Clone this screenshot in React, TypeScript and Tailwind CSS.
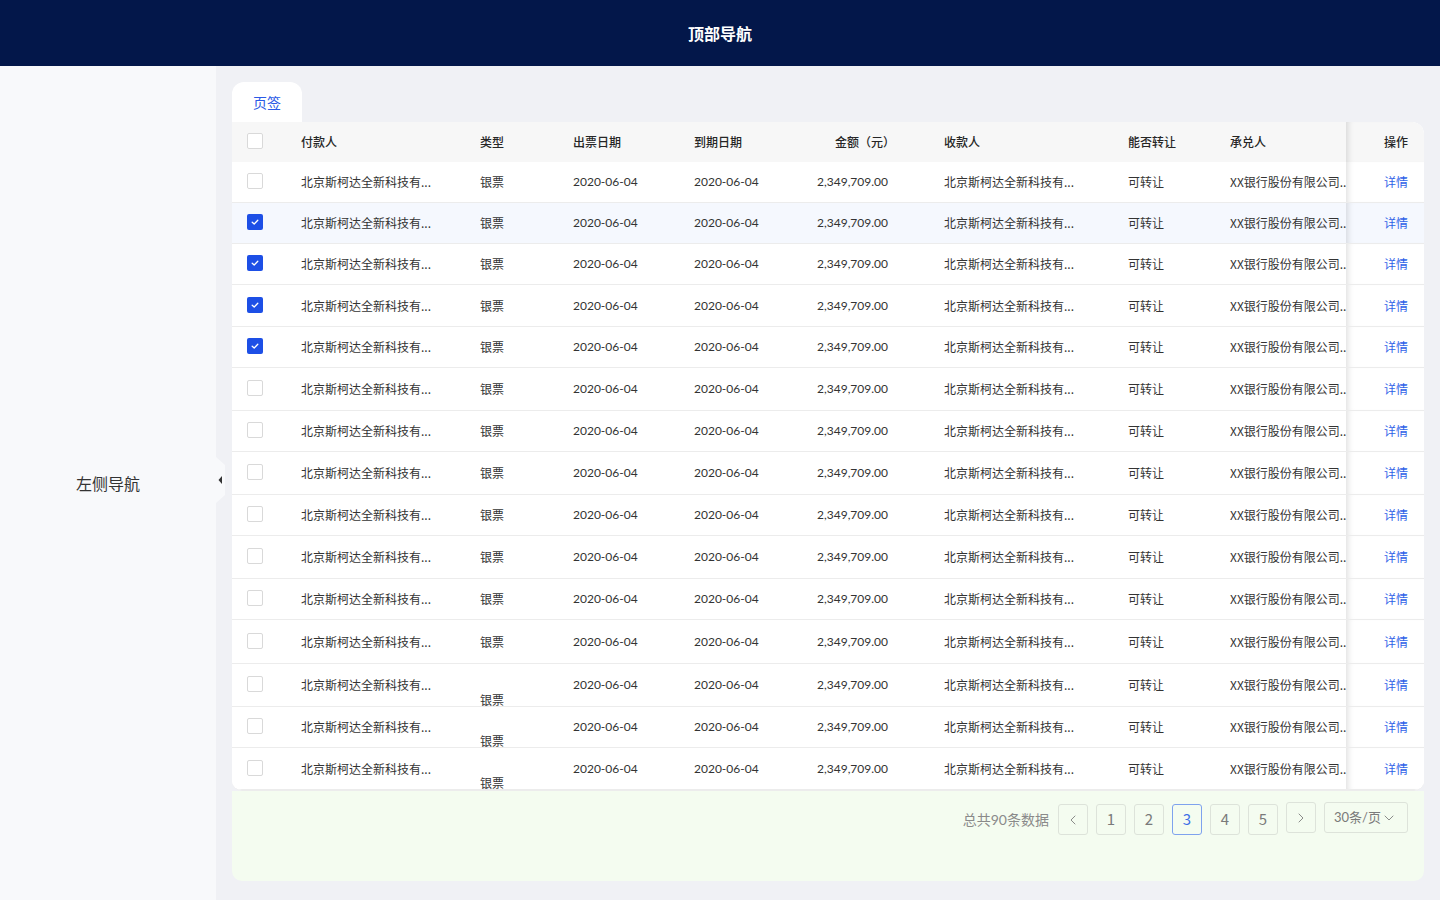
import React from 'react'
import { ChevronLeft, ChevronRight, ChevronDown } from 'lucide-react'

const FONT = { fontFamily: '"Noto Sans CJK SC", "Noto Sans", sans-serif' }
const NUM = { fontFamily: 'Lato, "Noto Sans CJK SC", sans-serif' }

interface Row {
  checked: boolean
  active?: boolean
  lowType?: boolean
  h: string
}

// 行高与截图逐行对齐
const rows: Row[] = [
  { checked: false, h: 'h-[41px]' },
  { checked: true, active: true, h: 'h-[41px]' },
  { checked: true, h: 'h-[41px]' },
  { checked: true, h: 'h-[42px]' },
  { checked: true, h: 'h-[41px]' },
  { checked: false, h: 'h-[43px]' },
  { checked: false, h: 'h-[41px]' },
  { checked: false, h: 'h-[43px]' },
  { checked: false, h: 'h-[41px]' },
  { checked: false, h: 'h-[43px]' },
  { checked: false, h: 'h-[41px]' },
  { checked: false, h: 'h-[44px]' },
  { checked: false, lowType: true, h: 'h-[43px]' },
  { checked: false, lowType: true, h: 'h-[41px]' },
  { checked: false, lowType: true, h: 'h-[42px]' },
]

function Checkbox({ checked }: { checked: boolean }) {
  if (checked) {
    return (
      <span className="flex w-4 h-4 items-center justify-center rounded-[2px] bg-[#1d4fe6]">
        <svg width="10" height="10" viewBox="0 0 10 10" fill="none">
          <path d="M2.2 5.2 L4.2 7 L7.8 3.2" stroke="white" strokeWidth="1.3" strokeLinecap="round" strokeLinejoin="round" />
        </svg>
      </span>
    )
  }
  return <span className="block w-4 h-4 rounded-[2px] border border-[#d9d9d9] bg-white" />
}

const fixedShadow = 'shadow-[inset_7px_0_6px_-5px_rgba(0,0,0,0.13)]'

function HeaderRow() {
  return (
    <div className="flex h-[40px] bg-[#f7f7f7] text-[12px] font-medium text-[#262626] rounded-tr-[12px]">
      <div className="w-[53px] flex items-center pl-[15px] -mt-[2px]">
        <Checkbox checked={false} />
      </div>
      <div className="w-[179px] flex items-center pl-4">付款人</div>
      <div className="w-[93px] flex items-center pl-4">类型</div>
      <div className="w-[121px] flex items-center pl-4">出票日期</div>
      <div className="w-[121px] flex items-center pl-4">到期日期</div>
      <div className="w-[105px] flex items-center justify-end pr-[9px]">金额（元）</div>
      <div className="w-[208px] flex items-center pl-[40px]">收款人</div>
      <div className="w-[102px] flex items-center pl-4">能否转让</div>
      <div className="w-[132px] flex items-center pl-4">承兑人</div>
      <div className={`w-[78px] flex items-center justify-end pr-4 rounded-tr-[12px] ${fixedShadow}`}>操作</div>
    </div>
  )
}

function BodyRow({ row }: { row: Row }) {
  const bg = row.active ? 'bg-[#f5f8fe]' : 'bg-white'
  return (
    <div className={`flex ${row.h} ${bg} border-b border-[#ececec] text-[12px] text-[#333333] whitespace-nowrap`}>
      <div className="w-[53px] flex items-center pl-[15px] -mt-[2px]">
        <Checkbox checked={row.checked} />
      </div>
      <div className="w-[179px] flex items-center pl-4">北京斯柯达全新科技有...</div>
      {row.lowType ? (
        <div className="w-[93px] flex items-end pl-4 leading-[14px] -mb-[1px]">银票</div>
      ) : (
        <div className="w-[93px] flex items-center pl-4">银票</div>
      )}
      <div className="w-[121px] flex items-center pl-4" style={NUM}>2020-06-04</div>
      <div className="w-[121px] flex items-center pl-4" style={NUM}>2020-06-04</div>
      <div className="w-[105px] flex items-center justify-end pr-4" style={NUM}>2,349,709.00</div>
      <div className="w-[208px] flex items-center pl-[40px]">北京斯柯达全新科技有...</div>
      <div className="w-[102px] flex items-center pl-4">可转让</div>
      <div className="w-[132px] flex items-center pl-4 overflow-visible">XX银行股份有限公司...</div>
      <div className={`w-[78px] flex items-center justify-end pr-4 ${bg} ${fixedShadow}`}>
        <span className="text-[#2f62e8] cursor-pointer">详情</span>
      </div>
    </div>
  )
}

function PageButton({ children, active }: { children: React.ReactNode; active?: boolean }) {
  return (
    <button
      className={`w-[30px] h-[31px] flex items-center justify-center rounded-[3px] border text-[15px] ${
        active ? 'border-[#7ea2ee] text-[#3f6fe6]' : 'border-[#dde3da] text-[#7a7a7a]'
      }`}
    >
      {children}
    </button>
  )
}

function Pagination() {
  return (
    <div className="h-[90px] bg-[#f4fcf0] rounded-b-[10px] flex justify-end items-start pt-[13px] pr-4 gap-2">
      <span className="h-[31px] flex items-center text-[14px] text-[#8a8a8a] mr-[1px]" style={NUM}>总共90条数据</span>
      <PageButton>
        <ChevronLeft className="w-4 h-4" strokeWidth={1.3} />
      </PageButton>
      <PageButton>1</PageButton>
      <PageButton>2</PageButton>
      <PageButton active>3</PageButton>
      <PageButton>4</PageButton>
      <PageButton>5</PageButton>
      <div className="-mt-[2px]">
        <PageButton>
          <ChevronRight className="w-4 h-4" strokeWidth={1.3} />
        </PageButton>
      </div>
      <button className="-mt-[2px] w-[84px] h-[31px] flex items-center justify-between pl-[9px] pr-[10px] rounded-[3px] border border-[#dde3da] text-[13px] text-[#7a7a7a]" style={NUM}>
        <span>30条/页</span>
        <ChevronDown className="w-4 h-4" strokeWidth={1.3} />
      </button>
    </div>
  )
}

export default function App() {
  return (
    <div className="w-[1440px] h-[900px] flex flex-col bg-[#f0f1f5]" style={FONT}>
      <header className="h-[66px] flex-shrink-0 bg-[#03174a] flex items-center justify-center">
        <h1 className="text-[16px] font-semibold text-white">顶部导航</h1>
      </header>
      <div className="flex flex-1 min-h-0">
        <aside className="relative w-[216px] flex-shrink-0 bg-[#f8f9fb] flex items-center justify-center">
          <span className="text-[16px] text-[#333333]">左侧导航</span>
          <svg className="absolute right-[-10px] top-[391px]" width="10" height="46" viewBox="0 0 10 46">
            <path d="M0 0 L9 8 L9 38 L0 46 Z" fill="#f8f9fb" />
            <path d="M6 19 L6 27 L2.5 23 Z" fill="#333333" />
          </svg>
        </aside>
        <main className="flex-1 pt-4 pl-4 pr-4 pb-5">
          <div className="flex flex-col">
            <div className="w-[70px] h-[40px] bg-white rounded-t-[12px] flex items-center justify-center text-[14px] text-[#2b5ae6]">
              页签
            </div>
            <div className="bg-white rounded-tr-[12px] rounded-b-[10px] overflow-hidden border-b border-[#ececec]">
              <HeaderRow />
              {rows.map((r, i) => (
                <BodyRow key={i} row={r} />
              ))}
            </div>
            <Pagination />
          </div>
        </main>
      </div>
    </div>
  )
}
